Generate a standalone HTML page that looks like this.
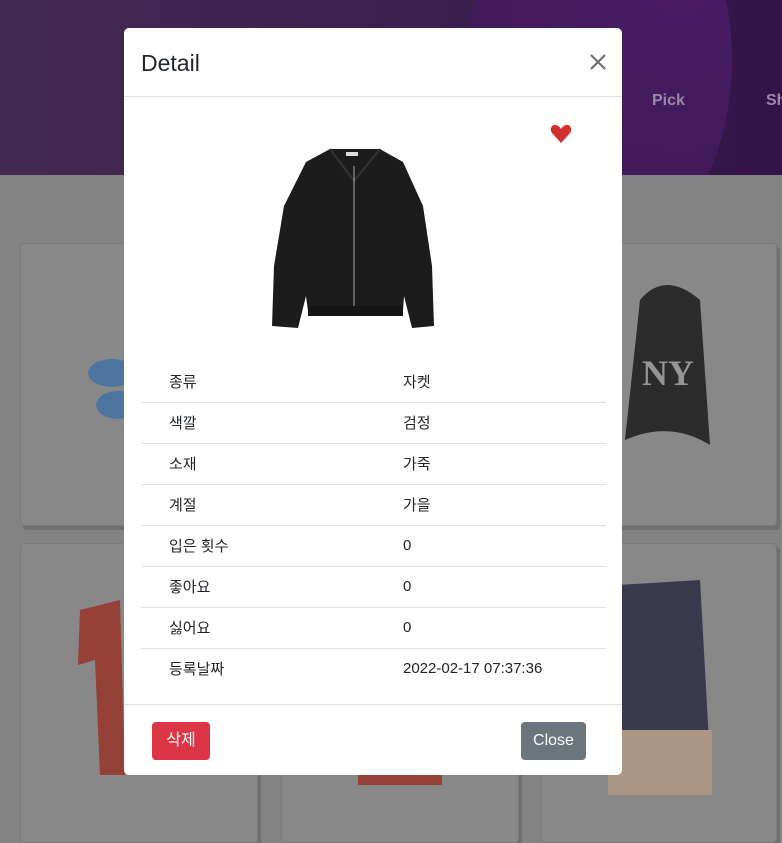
<!DOCTYPE html>
<html><head><meta charset="utf-8"><style>
*{box-sizing:border-box;margin:0;padding:0}
body{width:782px;height:818px;overflow:hidden;position:relative;background:#838383;font-family:"Liberation Sans","Noto Sans CJK KR",sans-serif;}
.hdr{position:absolute;left:0;top:0;width:782px;height:175px;background:linear-gradient(90deg,#432a51 0%,#3b1d4f 60%,#351349 100%);overflow:hidden}
.circ{position:absolute;left:470px;top:-140px;width:262px;height:400px;border-radius:50%;background:radial-gradient(circle at 80% 30%,#4a1d66,#3b1753)}
.nav{position:absolute;top:92px;color:#9a8aa5;font-weight:bold;font-size:16px}
.card{position:absolute;background:#888;border:1px solid #7a7a7a;border-radius:4px;box-shadow:3px 4px 0 #6f6f6f}
.modal{position:absolute;left:124px;top:28px;width:498px;height:747px;background:#fff;border-radius:5px}
.mh{height:69px;border-bottom:1px solid #dee2e6;position:relative}
.mh h5{position:absolute;left:17px;top:22px;font-size:23px;font-weight:normal;color:#212529}
table{position:absolute;left:17px;top:333px;width:465px;border-collapse:collapse;font-size:15px;color:#212529}
td{height:41px;border-bottom:1px solid #dee2e6;padding:0}
tr:last-child td{border-bottom:none}
td.a{padding-left:28px;width:262px}
.foot{position:absolute;left:0;top:676px;width:498px;border-top:1px solid #dee2e6;height:71px}
.btn{position:absolute;top:17px;height:38px;border-radius:4px;color:#fff;font-size:16px;line-height:38px;text-align:center}
</style></head><body>
<div class="hdr"><div class="circ"></div><div class="nav" style="left:652px">Pick</div><div class="nav" style="left:766px">Sh</div></div>
<div class="card" style="left:20px;top:243px;width:238px;height:283px"></div>
<div class="card" style="left:281px;top:243px;width:238px;height:283px"></div>
<div class="card" style="left:541px;top:243px;width:236px;height:283px"></div>
<div class="card" style="left:20px;top:543px;width:238px;height:300px"></div>
<div class="card" style="left:281px;top:543px;width:238px;height:300px"></div>
<div class="card" style="left:541px;top:543px;width:236px;height:300px"></div>
<svg style="position:absolute;left:0;top:0" width="782" height="818">
<g opacity="0.75">
<ellipse cx="112" cy="373" rx="24" ry="14" fill="#3a6fa8"/><ellipse cx="118" cy="405" rx="22" ry="14" fill="#3a6fa8"/>
<path d="M640 300 Q665 270 700 300 L710 445 Q670 420 625 440 Z" fill="#0e0e0e"/>
<text x="642" y="385" font-size="36" font-weight="bold" fill="#9a9a9a" font-family="Liberation Serif">NY</text>
<path d="M80 610 L120 600 L125 775 L100 775 L95 660 L78 665 Z" fill="#9a2a1c"/>
<rect x="358" y="770" width="84" height="15" fill="#9a2a1c"/>
<path d="M618 585 L700 580 L712 795 L608 795 Z" fill="#1f2238"/>
<rect x="608" y="730" width="104" height="65" fill="#b99a82"/>
</g></svg>
<div class="modal">
<div class="mh"><h5>Detail</h5>
<svg style="position:absolute;left:466px;top:26px" width="16" height="16"><path d="M1 1L15 15M15 1L1 15" stroke="#6c6c6c" stroke-width="2"/></svg></div>
<svg style="position:absolute;left:426px;top:96px" width="22" height="20"><path d="M11 19 L2 9 C-1 5 2 0 6 1 C8 1.5 10 3 11 5 C12 3 14 1.5 16 1 C20 0 23 5 20 9 Z" fill="#d42f2f"/></svg>
<svg style="position:absolute;left:144px;top:118px" width="174" height="190" viewBox="0 0 174 190">
<path d="M62 3 L112 3 L135 16 L155 60 L164 120 L166 180 L144 182 L136 150 L135 165 L40 165 L38 150 L30 182 L4 180 L6 120 L16 60 L38 16 Z" fill="#1c1c1c"/>
<path d="M62 3 L86 35 L112 3" fill="none" stroke="#333" stroke-width="2"/>
<line x1="86" y1="20" x2="86" y2="170" stroke="#aaa" stroke-width="1"/>
<rect x="78" y="6" width="12" height="4" fill="#ddd"/>
<rect x="40" y="160" width="95" height="10" fill="#151515"/>
</svg>
<table>
<tr><td class="a">종류</td><td>자켓</td></tr>
<tr><td class="a">색깔</td><td>검정</td></tr>
<tr><td class="a">소재</td><td>가죽</td></tr>
<tr><td class="a">계절</td><td>가을</td></tr>
<tr><td class="a">입은 횟수</td><td>0</td></tr>
<tr><td class="a">좋아요</td><td>0</td></tr>
<tr><td class="a">싫어요</td><td>0</td></tr>
<tr><td class="a">등록날짜</td><td>2022-02-17 07:37:36</td></tr>
</table>
<div class="foot">
<div class="btn" style="left:28px;width:58px;background:#dc3545">삭제</div>
<div class="btn" style="left:397px;width:65px;background:#6c757d">Close</div>
</div>
</div>
</body></html>
